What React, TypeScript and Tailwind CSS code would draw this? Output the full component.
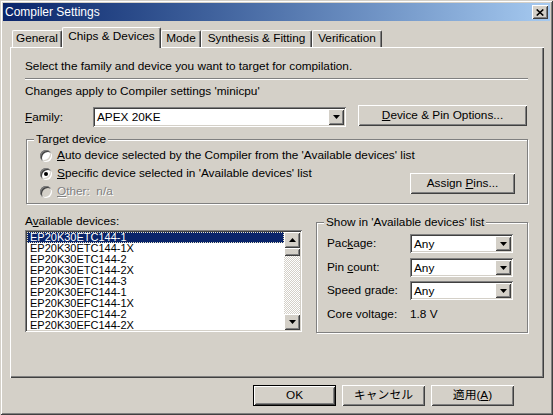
import type { ReactNode } from 'react'

const raised = "shadow-[inset_1px_1px_0_#fff,inset_-1px_-1px_0_#404040,inset_2px_2px_0_#d4d0c8,inset_-2px_-2px_0_#808080]"
const sunken = "shadow-[inset_1px_1px_0_#808080,inset_-1px_-1px_0_#fff,inset_2px_2px_0_#404040,inset_-2px_-2px_0_#d4d0c8]"
const etched = "border border-[#808080] shadow-[1px_1px_0_#fff,inset_1px_1px_0_#fff]"

const DownArrow = () => (
  <svg width="7" height="4" viewBox="0 0 7 4">
    <polygon points="0,0 7,0 3.5,4" fill="black" />
  </svg>
)

const UpArrow = () => (
  <svg width="7" height="4" viewBox="0 0 7 4">
    <polygon points="0,4 7,4 3.5,0" fill="black" />
  </svg>
)

const Combo = ({ value, className }: { value: string; className: string }) => (
  <div className={`flex bg-white p-[2px] ${sunken} ${className}`}>
    <div className="flex-1 pl-[2px] flex items-center leading-[14px]">{value}</div>
    <div className={`w-[16px] bg-[#d4d0c8] flex items-center justify-center ${raised}`}>
      <DownArrow />
    </div>
  </div>
)

const Button = ({ children, className, isDefault }: { children: ReactNode; className: string; isDefault?: boolean }) => (
  <div className={`${isDefault ? 'border border-black' : ''} ${className}`}>
    <div className={`w-full h-full flex items-center justify-center ${raised}`}>{children}</div>
  </div>
)

const Radio = ({ checked, disabled }: { checked?: boolean; disabled?: boolean }) => (
  <div className={`shrink-0 w-[12px] h-[12px] rounded-full flex items-center justify-center ${disabled ? 'bg-[#d4d0c8]' : 'bg-white'} ${sunken}`}>
    {checked && <div className="w-[4px] h-[4px] rounded-full bg-black" />}
  </div>
)

const Tab = ({ label, width, selected }: { label: string; width: string; selected?: boolean }) => (
  <div
    className={`${width} ${selected ? 'h-[21px] -mb-[1px] relative z-10 pb-[3px]' : 'h-[17px]'} flex items-center justify-center whitespace-nowrap bg-[#d4d0c8] border-l border-t border-white border-r border-r-[#404040] rounded-tl-[2px] rounded-tr-[2px] shadow-[inset_-1px_0_0_#808080]`}
  >
    {label}
  </div>
)

const devices = [
  'EP20K30ETC144-1',
  'EP20K30ETC144-1X',
  'EP20K30ETC144-2',
  'EP20K30ETC144-2X',
  'EP20K30ETC144-3',
  'EP20K30EFC144-1',
  'EP20K30EFC144-1X',
  'EP20K30EFC144-2',
  'EP20K30EFC144-2X',
]

export default function App() {
  return (
    <div className="w-[553px] h-[415px] bg-[#d4d0c8] p-[3px] flex flex-col text-[11.8px] text-black font-['Liberation_Sans','Noto_Sans_CJK_JP',sans-serif] shadow-[inset_1px_1px_0_#d4d0c8,inset_-1px_-1px_0_#404040,inset_2px_2px_0_#fff,inset_-2px_-2px_0_#808080]">
      {/* title bar */}
      <div className="h-[18px] flex items-center justify-between bg-linear-to-r from-[#0a246a] to-[#a6caf0] pl-[2px] pr-[2px]">
        <span className="text-white text-[12px] leading-[14px]">Compiler Settings</span>
        <div className={`w-[16px] h-[14px] bg-[#d4d0c8] flex items-center justify-center ${raised}`}>
          <svg width="8" height="7" viewBox="0 0 8 7">
            <path d="M0.7 0.5L7.3 6.5M7.3 0.5L0.7 6.5" stroke="black" strokeWidth="1.6" />
          </svg>
        </div>
      </div>

      {/* tabs */}
      <div className="h-[26px] flex items-end pl-[9px]">
        <Tab label="General" width="w-[50px]" />
        <Tab label="Chips & Devices" width="w-[99px]" selected />
        <Tab label="Mode" width="w-[40px]" />
        <Tab label="Synthesis & Fitting" width="w-[111px]" />
        <Tab label="Verification" width="w-[70px]" />
      </div>

      {/* panel */}
      <div className="ml-[7px] w-[534px] h-[331px] pl-[15px] pt-[12px] flex flex-col shadow-[inset_1px_1px_0_#fff,inset_-1px_-1px_0_#404040,inset_-2px_-2px_0_#808080]">
        <div className="h-[14px] leading-[14px] whitespace-nowrap">Select the family and device you want to target for compilation.</div>
        <div className="mt-[5px] w-[503px] h-[2px] border-t border-[#808080] border-b border-b-white" />
        <div className="mt-[4px] h-[14px] leading-[14px] whitespace-nowrap">Changes apply to Compiler settings 'minicpu'</div>

        <div className="mt-[7px] flex items-start">
          <div className="w-[68px] mt-[5px] h-[14px] leading-[14px]">
            <u>F</u>amily:
          </div>
          <Combo value="APEX 20KE" className="mt-[2px] w-[253px] h-[20px]" />
          <Button className="ml-[12px] w-[169px] h-[21px]">
            <span>
              <u>D</u>evice &amp; Pin Options...
            </span>
          </Button>
        </div>

        {/* target device */}
        <div className={`mt-[12px] ml-[1px] w-[502px] h-[65px] relative ${etched}`}>
          <div className="absolute -top-[8px] left-[7px] px-[2px] bg-[#d4d0c8] leading-[14px]">Target device</div>
          <div className="flex pt-[7px] pl-[13px]">
            <div className="flex-1 min-w-0 flex flex-col">
              <div className="h-[18px] flex items-center gap-[5px] whitespace-nowrap">
                <Radio />
                <span>
                  <u>A</u>uto device selected by the Compiler from the 'Available devices' list
                </span>
              </div>
              <div className="h-[18px] flex items-center gap-[5px] whitespace-nowrap">
                <Radio checked />
                <span>
                  <u>S</u>pecific device selected in 'Available devices' list
                </span>
              </div>
              <div className="h-[18px] flex items-center gap-[5px] whitespace-nowrap">
                <Radio disabled />
                <span className="text-[#808080] [text-shadow:1px_1px_0_#fff]">
                  <u>O</u>ther:&nbsp; n/a
                </span>
              </div>
            </div>
            <Button className="shrink-0 mt-[26px] mr-[12px] w-[105px] h-[21px]">
              <span>
                Assign <u>P</u>ins...
              </span>
            </Button>
          </div>
        </div>

        {/* lower row */}
        <div className="mt-[10px] flex items-start">
          <div className="w-[277px] flex flex-col">
            <div className="h-[14px] leading-[14px]">
              A<u>v</u>ailable devices:
            </div>
            <div className={`mt-[2px] h-[102px] bg-white p-[2px] flex ${sunken}`}>
              <div className="flex-1 overflow-hidden flex flex-col text-[11px]">
                {devices.map((d, i) => (
                  <div
                    key={d}
                    className={`shrink-0 h-[11px] leading-[11px] pl-[3px] whitespace-nowrap ${
                      i === 0 ? 'bg-[#0a246a] text-white outline-dotted outline-1 -outline-offset-1 outline-[#e8e4c8]' : ''
                    }`}
                  >
                    {d}
                  </div>
                ))}
              </div>
              <div className="w-[16px] flex flex-col">
                <div className={`h-[16px] bg-[#d4d0c8] flex items-center justify-center ${raised}`}>
                  <UpArrow />
                </div>
                <div className={`h-[8px] bg-[#d4d0c8] ${raised}`} />
                <div className="flex-1 bg-[repeating-conic-gradient(#d4d0c8_0_25%,#fff_0_50%)] bg-[length:2px_2px]" />
                <div className={`h-[16px] bg-[#d4d0c8] flex items-center justify-center ${raised}`}>
                  <DownArrow />
                </div>
              </div>
            </div>
          </div>

          <div className={`ml-[14px] mt-[8px] w-[212px] h-[111px] relative pl-[10px] pt-[11px] ${etched}`}>
            <div className="absolute -top-[8px] left-[7px] px-[2px] bg-[#d4d0c8] leading-[14px] whitespace-nowrap">
              Show in 'Available devices' list
            </div>
            <div className="h-[19px] flex items-center">
              <div className="w-[83px]">
                Pac<u>k</u>age:
              </div>
              <Combo value="Any" className="w-[103px] h-[19px]" />
            </div>
            <div className="mt-[5px] h-[19px] flex items-center">
              <div className="w-[83px]">
                Pin <u>c</u>ount:
              </div>
              <Combo value="Any" className="w-[103px] h-[19px]" />
            </div>
            <div className="mt-[4px] h-[19px] flex items-center">
              <div className="w-[83px]">
                Speed <u>g</u>rade:
              </div>
              <Combo value="Any" className="w-[103px] h-[19px]" />
            </div>
            <div className="mt-[7px] h-[14px] leading-[14px] flex">
              <div className="w-[83px]">Core voltage:</div>
              <div>1.8 V</div>
            </div>
          </div>
        </div>
      </div>

      {/* dialog buttons */}
      <div className="mt-[7px] h-[21px] flex justify-end gap-[6px] pr-[36px]">
        <Button isDefault className="w-[83px] h-[21px]">
          OK
        </Button>
        <Button className="w-[83px] h-[21px]">キャンセル</Button>
        <Button className="w-[83px] h-[21px]">
          <span>
            適用(<u>A</u>)
          </span>
        </Button>
      </div>
    </div>
  )
}
